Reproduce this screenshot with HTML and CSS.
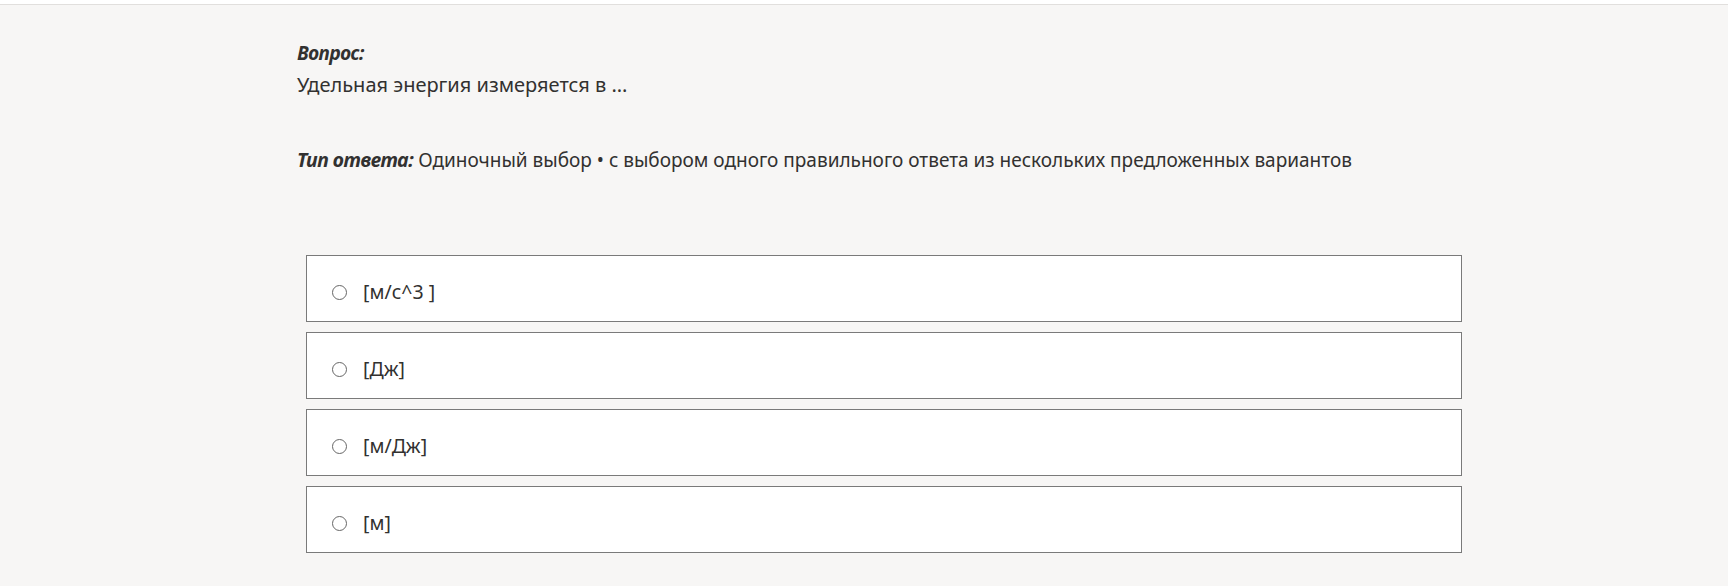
FILE: index.html
```html
<!DOCTYPE html>
<html lang="ru">
  <head>
    <meta charset="UTF-8" />
    <meta name="viewport" content="width=device-width, initial-scale=1" />
    <title>Вопрос</title>
    <link rel="stylesheet" href="styles.css">
  </head>
  <body>
    <div class="top-bar"></div>
    <div class="page">
      <div class="label">Вопрос:</div>
      <div class="question">Удельная энергия измеряется в ...</div>
      <div class="answer-type"><span class="label">Тип ответа:</span> Одиночный выбор • с выбором одного правильного ответа из нескольких предложенных вариантов</div>

      <div class="options">
        <label class="option">
          <span class="radio"></span>
          <span class="option-text">[м/с^3 ]</span>
        </label>
        <label class="option">
          <span class="radio"></span>
          <span class="option-text">[Дж]</span>
        </label>
        <label class="option">
          <span class="radio"></span>
          <span class="option-text">[м/Дж]</span>
        </label>
        <label class="option">
          <span class="radio"></span>
          <span class="option-text">[м]</span>
        </label>
      </div>
    </div>
  </body>
</html>
```

FILE: styles.css
```css
* {
  box-sizing: border-box;
  margin: 0;
  padding: 0;
}
body {
  font-family: "Noto Sans", "Open Sans", sans-serif;
  background: #f7f6f5;
  color: #323130;
}
.top-bar {
  height: 5px;
  background: #fff;
  border-bottom: 1px solid #e1dfdd;
}
.page {
  padding: 36px 257px 0 297px;
}
.label {
  font-weight: bold;
  font-style: italic;
  font-size: 19px;
  line-height: 24px;
  letter-spacing: -0.5px;
}
.answer-type .label {
  font-size: 19.5px;
}
.question {
  margin-top: 6px;
  font-size: 20px;
  line-height: 28px;
}
.answer-type {
  margin-top: 47px;
  font-size: 19px;
  line-height: 28px;
}
.options {
  margin: 81px 9px 0;
  display: flex;
  flex-direction: column;
  gap: 10px;
}
.option {
  display: flex;
  align-items: center;
  gap: 16px;
  background: #fff;
  border: 1px solid #7a7a7a;
  padding: 22px 25px 15px;
  font-size: 19.5px;
  line-height: 28px;
  cursor: pointer;
}
.radio {
  width: 15px;
  height: 15px;
  border: 1px solid #666;
  border-radius: 50%;
  flex-shrink: 0;
}
```
